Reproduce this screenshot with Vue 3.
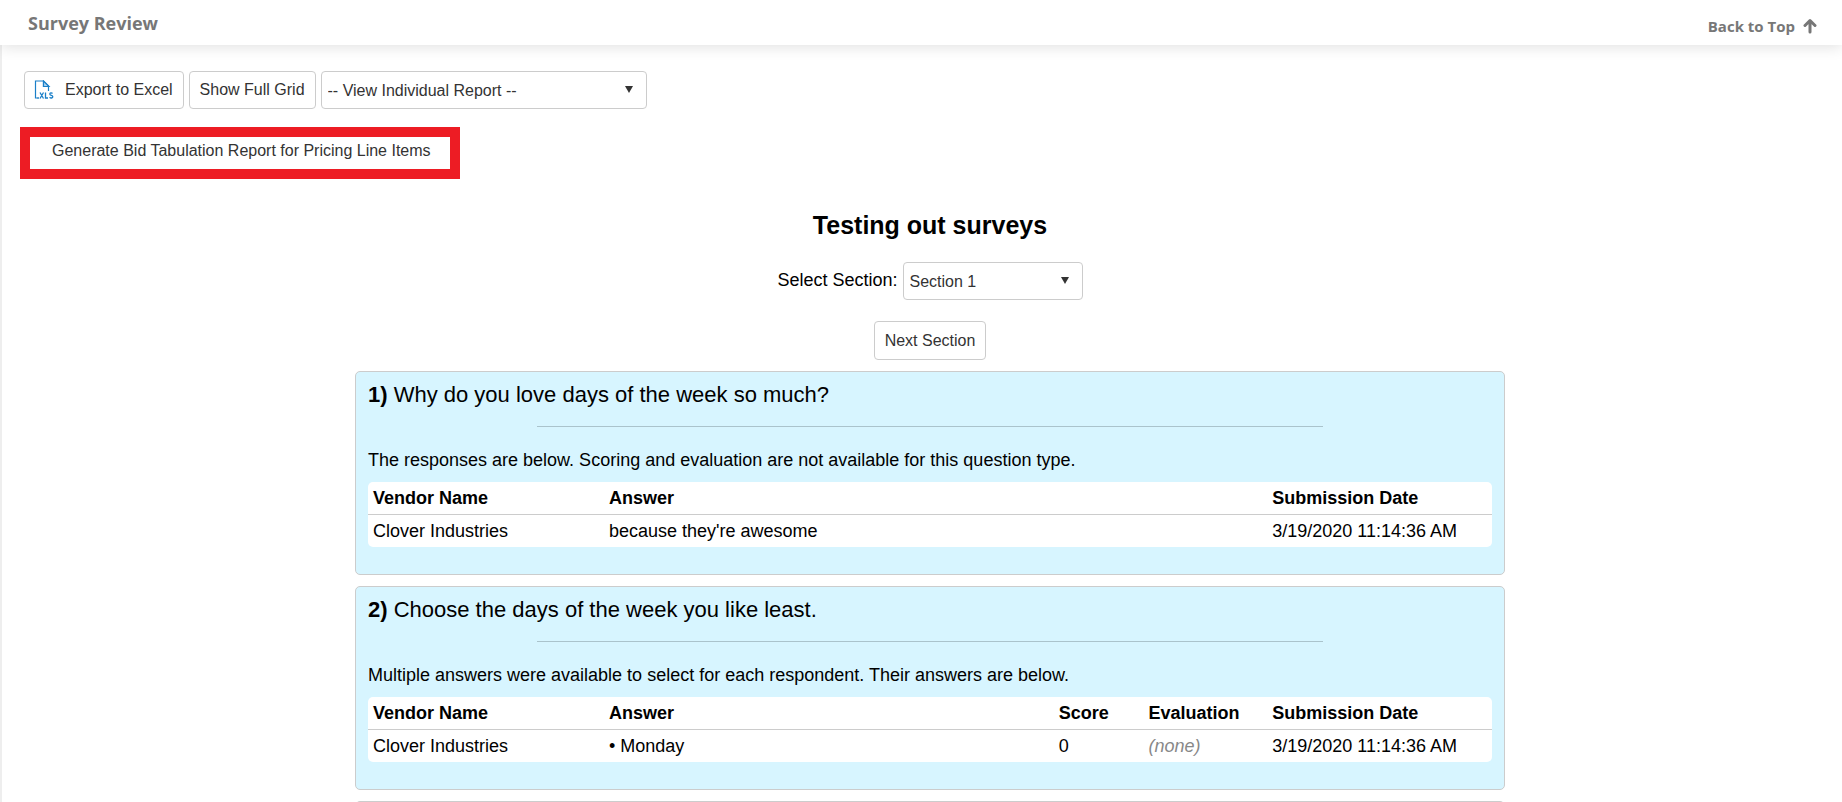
<script setup>
import { ref } from 'vue'

const report = ref('')
const section = ref('1')

const questions = [
  {
    number: 1,
    title: 'Why do you love days of the week so much?',
    note: 'The responses are below. Scoring and evaluation are not available for this question type.',
    scored: false,
    rows: [{ vendor: 'Clover Industries', answer: "because they're awesome", date: '3/19/2020 11:14:36 AM' }],
  },
  {
    number: 2,
    title: 'Choose the days of the week you like least.',
    note: 'Multiple answers were available to select for each respondent. Their answers are below.',
    scored: true,
    rows: [{ vendor: 'Clover Industries', answer: '• Monday', score: 0, date: '3/19/2020 11:14:36 AM' }],
  },
]
</script>

<template>
  <div class="page">
    <header class="topbar">
      <h1 class="topbar-title">Survey Review</h1>
      <a class="back-link" href="#top">
        Back to Top
        <svg class="arrow" viewBox="0 0 14 16" aria-hidden="true">
          <path d="M7 14V3M2 7.500 7 2.500l5 5" />
        </svg>
      </a>
    </header>

    <main class="content">
      <div class="toolbar">
        <button class="btn btn-export" type="button">
          <svg class="xls" viewBox="0 0 20 20" aria-hidden="true">
            <path d="M5 18H1.500V1H9.500l5 5v5M9.500 1v5.500H15" />
            <path class="fold" d="M9.500 1v5.500H15z" />
            <path class="fine" d="M6 12.500l3.500 6M9.500 12.500l-3.500 6M11.500 12.500v5.500h2.500M18.500 13.500c-.8-1-2.700-.8-2.700.5 0 1.800 3 1 3 2.800 0 1.400-2.200 1.600-3.200.5M3.500 18h1" />
          </svg>
          Export to Excel
        </button>
        <button class="btn" type="button">Show Full Grid</button>
        <span class="picker picker-report">
          <select v-model="report" aria-label="View Individual Report">
            <option value="">-- View Individual Report --</option>
          </select>
          <svg class="caret" viewBox="0 0 8 7" aria-hidden="true"><path d="M0 0h8L4 7z" /></svg>
        </span>
      </div>

      <button class="generate" type="button">Generate Bid Tabulation Report for Pricing Line Items</button>

      <h2 class="survey-title">Testing out surveys</h2>

      <div class="section-row">
        <label for="section">Select Section:</label>
        <span class="picker picker-section">
          <select id="section" v-model="section">
            <option value="1">Section 1</option>
          </select>
          <svg class="caret" viewBox="0 0 8 7" aria-hidden="true"><path d="M0 0h8L4 7z" /></svg>
        </span>
      </div>

      <div class="next-row">
        <button class="btn" type="button">Next Section</button>
      </div>

      <div class="cards">
        <article v-for="q in questions" :key="q.number" class="card">
          <h3 class="question"><b>{{ q.number }})</b> {{ q.title }}</h3>
          <hr class="rule" />
          <p class="note">{{ q.note }}</p>
          <table class="answers">
            <thead>
              <tr>
                <th class="col-vendor">Vendor Name</th>
                <th class="col-answer" :colspan="q.scored ? 1 : 3">Answer</th>
                <th v-if="q.scored" class="col-score">Score</th>
                <th v-if="q.scored" class="col-eval">Evaluation</th>
                <th class="col-date">Submission Date</th>
              </tr>
            </thead>
            <tbody>
              <tr v-for="row in q.rows" :key="row.vendor">
                <td>{{ row.vendor }}</td>
                <td :colspan="q.scored ? 1 : 3">{{ row.answer }}</td>
                <td v-if="q.scored">{{ row.score }}</td>
                <td v-if="q.scored" class="none">(none)</td>
                <td>{{ row.date }}</td>
              </tr>
            </tbody>
          </table>
        </article>
        <article class="card card-pending" aria-hidden="true"></article>
      </div>
    </main>
  </div>
</template>

<style>
html {
  scrollbar-width: none;
}
body {
  margin: 0;
  background: #fff;
}
</style>

<style scoped>
.page {
  font-family: "Liberation Sans", Arial, sans-serif;
  font-size: 18px;
  line-height: 22px;
  color: #000;
}
.topbar {
  position: relative;
  display: flex;
  justify-content: space-between;
  align-items: center;
  height: 45px;
  padding: 0 25px 0 28px;
  box-sizing: border-box;
  background: #fff;
  box-shadow: 0 2px 14px rgba(0, 0, 0, 0.12);
  font-family: "Open Sans", sans-serif;
  font-weight: 700;
  color: #777;
}
.topbar-title {
  margin: 0;
  font-size: 18px;
  line-height: 24px;
}
.back-link {
  display: flex;
  align-items: center;
  gap: 8px;
  padding-top: 6px;
  font-size: 15px;
  line-height: 20px;
  color: #777;
  text-decoration: none;
}
.arrow {
  width: 14px;
  height: 16px;
  fill: none;
  stroke: #777;
  stroke-width: 3;
  stroke-linecap: round;
  stroke-linejoin: round;
}
.content {
  padding: 26px 6px 0 22px;
  border-left: 2px solid #eee;
}
.toolbar {
  display: flex;
  gap: 5px;
}
.btn,
.picker select {
  height: 38px;
  box-sizing: border-box;
  border: 1px solid #ccc;
  border-radius: 4px;
  background: #fff;
  color: #333;
  font-family: inherit;
  font-size: 16px;
  line-height: 20px;
}
.btn {
  display: inline-flex;
  align-items: center;
  padding: 0 10px;
}
.btn-export {
  gap: 11px;
  padding-left: 9px;
}
.xls {
  width: 20px;
  height: 20px;
  fill: none;
  stroke: #1a7fc8;
  stroke-width: 1.200;
}
.xls .fold {
  fill: #a9d1ee;
}
.xls .fine {
  stroke-width: 1.300;
}
.picker {
  position: relative;
  display: inline-flex;
}
.picker select {
  width: 100%;
  padding: 2px 24px 0 6px;
  appearance: none;
}
.picker-report {
  width: 326px;
}
.picker-section {
  width: 180px;
}
.caret {
  position: absolute;
  top: 15px;
  right: 14px;
  width: 8px;
  height: 7px;
  fill: #333;
  pointer-events: none;
}
.generate {
  display: block;
  height: 52px;
  margin: 18px 0 0 -4px;
  padding: 0 19px 4px 22px;
  box-sizing: border-box;
  border: 10px solid #ed1c24;
  background: #fff;
  color: #333;
  font-family: inherit;
  font-size: 16px;
  line-height: 18px;
}
.survey-title {
  margin: 30px 0 0;
  font-size: 25px;
  line-height: 32px;
  text-align: center;
}
.section-row {
  display: flex;
  justify-content: center;
  gap: 5px;
  margin-top: 21px;
}
.section-row label {
  padding-top: 7px;
}
.next-row {
  display: flex;
  justify-content: center;
  margin-top: 21px;
}
.next-row .btn {
  height: 39px;
}
.cards {
  display: flex;
  flex-direction: column;
  gap: 11px;
  max-width: 1150px;
  margin: 11px auto 0;
}
.card {
  box-sizing: border-box;
  padding: 10px 12px 27px;
  border: 1px solid #ccc;
  border-radius: 5px;
  background: #d7f5ff;
}
.card-pending {
  height: 204px;
}
.question {
  margin: 0;
  font-size: 22px;
  font-weight: 400;
  line-height: 26px;
}
.rule {
  width: 70%;
  margin: 18px auto 0;
  border: 0;
  border-top: 1px solid #aac3cc;
}
.note {
  margin: 22px 0 11px;
}
.answers {
  width: 100%;
  table-layout: fixed;
  border-collapse: separate;
  border-spacing: 0;
  border-radius: 5px;
  background: #fff;
}
.answers th,
.answers td {
  box-sizing: border-box;
  padding: 5px;
  text-align: left;
}
.answers th {
  border-bottom: 1px solid #ccc;
}
.col-vendor {
  width: 21%;
}
.col-score {
  width: 8%;
}
.col-eval {
  width: 11%;
}
.col-date {
  width: 20%;
}
.answers .none {
  color: #888;
  font-style: italic;
}
</style>
